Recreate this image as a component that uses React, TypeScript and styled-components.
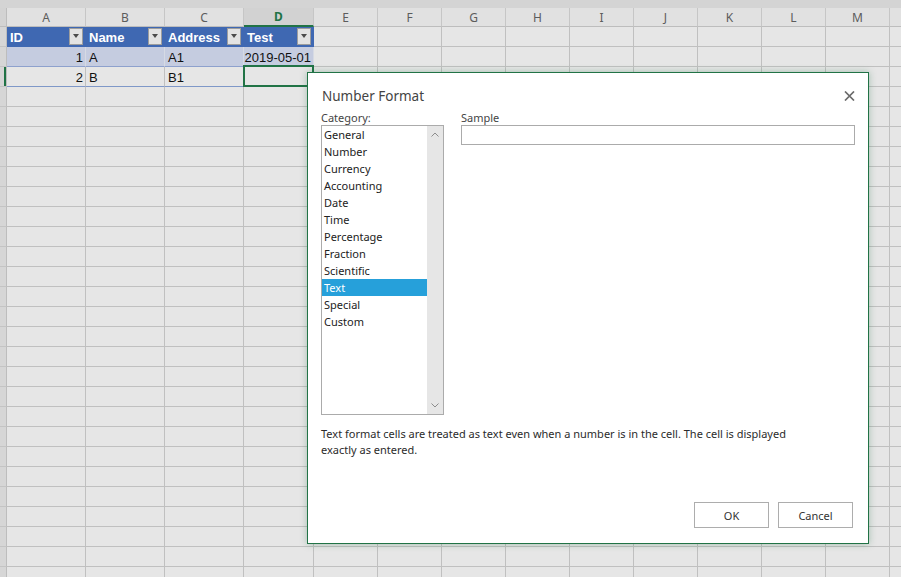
import styled, { createGlobalStyle, css } from "styled-components";

const GlobalStyle = createGlobalStyle`
  html, body {
    margin: 0;
    padding: 0;
    background: #e6e6e6;
  }
  body {
    overflow: hidden;
  }
`;

const Screen = styled.div`
  position: relative;
  width: 901px;
  height: 577px;
  overflow: hidden;
  background: #e6e6e6;
  font-family: "Liberation Sans", Arial, sans-serif;
`;

const TopBand = styled.div`
  height: 8px;
  background: #d4d4d4;
`;

// Sheet grid
const SheetGrid = styled.div`
  display: grid;
  grid-template-columns: 7px 79px 79px 79px 70px repeat(10, 64px);
  grid-template-rows: 19px;
  grid-auto-rows: 20px;
`;

const Corner = styled.div`
  box-sizing: border-box;
  background: #d3d3d3;
  border-right: 1px solid #bdbdbd;
  border-bottom: 1px solid #bdbdbd;
`;

const ColHeader = styled.div<{ $active?: boolean }>`
  box-sizing: border-box;
  display: flex;
  align-items: center;
  justify-content: center;
  background: #e1e1e1;
  border-right: 1px solid #c6c6c6;
  border-bottom: 1px solid #bdbdbd;
  color: #5c5c5c;
  font: 400 12px "Noto Sans", sans-serif;

  ${(p) =>
    p.$active &&
    css`
      background: #d2d2d2;
      color: #217346;
      font-weight: 700;
      border-bottom: 2px solid #217346;
    `}
`;

const RowHeader = styled.div<{ $active?: boolean }>`
  box-sizing: border-box;
  background: #d6d6d6;
  border-right: 1px solid #bdbdbd;
  border-bottom: 1px solid #c4c4c4;
  ${(p) => p.$active && css`box-shadow: inset -2px 0 0 #217346;`}
`;

type Tone = "head" | "band" | "row" | "plain";

const toneStyles: Record<Tone, ReturnType<typeof css>> = {
  head: css`
    background: #3f68b2;
    color: #fff;
    font-weight: 700;
    border-right-color: #3f68b2;
    border-bottom-color: #3f68b2;
  `,
  band: css`
    background: #c5cce0;
    border-right-color: #d6dae4;
    border-bottom-color: #8ea1cd;
  `,
  row: css`
    background: #e6e6e6;
    border-bottom-color: #7f98c8;
  `,
  plain: css``,
};

const Cell = styled.div<{ $tone?: Tone; $align?: "left" | "right"; $selected?: boolean }>`
  position: relative;
  box-sizing: border-box;
  display: flex;
  align-items: center;
  justify-content: ${(p) => (p.$align === "right" ? "flex-end" : "flex-start")};
  padding: 1px ${(p) => (p.$align === "right" ? "2px" : "0")} 0 3px;
  background: #e6e6e6;
  border-right: 1px solid #c0c0c0;
  border-bottom: 1px solid #c0c0c0;
  color: #111;
  font-size: 13px;
  white-space: nowrap;

  ${(p) => toneStyles[p.$tone ?? "plain"]}

  ${(p) =>
    p.$selected &&
    css`
      &::after {
        content: "";
        position: absolute;
        left: -1px;
        top: -2px;
        right: -1px;
        bottom: -1px;
        border: 2px solid #217346;
      }
    `}
`;

const HeadLabel = styled.span`
  flex: 1;
`;

const FilterButton = styled.span`
  box-sizing: border-box;
  display: flex;
  align-items: center;
  justify-content: center;
  width: 14px;
  height: 17px;
  margin: 0 2px 2px 0;
  background: #e3e3e3;
  border: 1px solid #9d9d9d;

  &::before {
    content: "";
    border-left: 3.5px solid transparent;
    border-right: 3.5px solid transparent;
    border-top: 4px solid #4b4b4b;
  }
`;

// Dialog
const Dialog = styled.div`
  position: absolute;
  left: 307px;
  top: 72px;
  width: 562px;
  height: 472px;
  box-sizing: border-box;
  display: flex;
  flex-direction: column;
  padding: 13px 13px 15px 13px;
  background: #fff;
  border: 1px solid #217346;
  box-shadow: 0 0 7px rgba(33, 115, 70, 0.35);
  font-family: "Noto Sans", sans-serif;
  font-size: 11px;
  color: #333;
`;

const TitleRow = styled.div`
  display: flex;
  align-items: center;
  justify-content: space-between;
  height: 20px;
`;

const Title = styled.span`
  padding-left: 1px;
  font-size: 13.5px;
  color: #444;
`;

const CloseButton = styled.span`
  display: flex;
  margin-right: 0;
`;

const Body = styled.div`
  display: flex;
  gap: 17px;
  margin-top: 4px;
`;

const LeftCol = styled.div`
  display: flex;
  flex-direction: column;
  width: 123px;
`;

const RightCol = styled.div`
  display: flex;
  flex: 1;
  flex-direction: column;
`;

const FieldLabel = styled.span`
  line-height: 15px;
  color: #444;
`;

const ListBox = styled.div`
  box-sizing: border-box;
  display: flex;
  height: 290px;
  border: 1px solid #ababab;
`;

const Items = styled.div`
  flex: 1;
`;

const Item = styled.div<{ $selected?: boolean }>`
  height: 17px;
  line-height: 17px;
  padding-left: 2px;
  color: #222;
  ${(p) =>
    p.$selected &&
    css`
      background: #26a0da;
      color: #fff;
    `}
`;

const ScrollBar = styled.div`
  display: flex;
  flex-direction: column;
  justify-content: space-between;
  width: 16px;
  background: #e6e6e6;
`;

const ScrollArrow = styled.span`
  display: flex;
  align-items: center;
  justify-content: center;
  height: 17px;
`;

const SampleBox = styled.div`
  box-sizing: border-box;
  height: 20px;
  border: 1px solid #ababab;
`;

const Description = styled.p`
  margin: 11px 0 0;
  line-height: 16px;
  color: #2b2b2b;
`;

const Spacer = styled.div`
  flex: 1;
`;

const ButtonRow = styled.div`
  display: flex;
  justify-content: flex-end;
  gap: 9px;
  margin-right: 2px;
`;

const Button = styled.button`
  box-sizing: border-box;
  width: 75px;
  height: 26px;
  padding: 0;
  background: #fff;
  border: 1px solid #adadad;
  color: #333;
  font: 11px "Noto Sans", sans-serif;
`;

// N is only partly on screen, so its letter is not shown
const columns = ["A", "B", "C", "D", "E", "F", "G", "H", "I", "J", "K", "L", "M", ""];
const headers = ["ID", "Name", "Address", "Test"];

type Row = { tone: Tone; active?: boolean; cells: { text: string; align?: "left" | "right"; selected?: boolean }[] };

const tableRows: Row[] = [
  {
    tone: "band",
    cells: [{ text: "1", align: "right" }, { text: "A" }, { text: "A1" }, { text: "2019-05-01", align: "right" }],
  },
  {
    tone: "row",
    active: true,
    cells: [{ text: "2", align: "right" }, { text: "B" }, { text: "B1" }, { text: "", selected: true }],
  },
];

const categories = [
  "General",
  "Number",
  "Currency",
  "Accounting",
  "Date",
  "Time",
  "Percentage",
  "Fraction",
  "Scientific",
  "Text",
  "Special",
  "Custom",
];

const emptyRows = 26;

const Chevron = ({ up }: { up?: boolean }) => (
  <svg width="8" height="5" viewBox="0 0 8 5">
    <path d={up ? "M0.5 4.5L4 1L7.5 4.5" : "M0.5 0.5L4 4L7.5 0.5"} stroke="#8c8c8c" strokeWidth="1" fill="none" />
  </svg>
);

export default function App() {
  const rest = columns.slice(4);

  return (
    <Screen>
      <GlobalStyle />
      <TopBand />
      <SheetGrid>
        <Corner />
        {columns.map((c, i) => (
          <ColHeader key={"c" + i} $active={c === "D"}>
            {c}
          </ColHeader>
        ))}

        <RowHeader />
        {headers.map((h) => (
          <Cell key={h} $tone="head">
            <HeadLabel>{h}</HeadLabel>
            <FilterButton />
          </Cell>
        ))}
        {rest.map((_, i) => (
          <Cell key={"h" + i} />
        ))}

        {tableRows.map((row, r) => (
          <>
            <RowHeader key={"rh" + r} $active={row.active} />
            {row.cells.map((cell, i) => (
              <Cell key={r + "-" + i} $tone={row.tone} $align={cell.align} $selected={cell.selected}>
                {cell.text}
              </Cell>
            ))}
            {rest.map((_, i) => (
              <Cell key={r + "r" + i} />
            ))}
          </>
        ))}

        {Array.from({ length: emptyRows }).map((_, r) => (
          <>
            <RowHeader key={"er" + r} />
            {columns.map((_, i) => (
              <Cell key={"e" + r + "-" + i} />
            ))}
          </>
        ))}
      </SheetGrid>

      <Dialog>
        <TitleRow>
          <Title>Number Format</Title>
          <CloseButton title="Close">
            <svg width="11" height="10" viewBox="0 0 11 10">
              <path d="M1 0.5L10 9.5M10 0.5L1 9.5" stroke="#6a6a6a" strokeWidth="1.7" />
            </svg>
          </CloseButton>
        </TitleRow>

        <Body>
          <LeftCol>
            <FieldLabel>Category:</FieldLabel>
            <ListBox>
              <Items>
                {categories.map((c) => (
                  <Item key={c} $selected={c === "Text"}>
                    {c}
                  </Item>
                ))}
              </Items>
              <ScrollBar>
                <ScrollArrow>
                  <Chevron up />
                </ScrollArrow>
                <ScrollArrow>
                  <Chevron />
                </ScrollArrow>
              </ScrollBar>
            </ListBox>
          </LeftCol>

          <RightCol>
            <FieldLabel>Sample</FieldLabel>
            <SampleBox />
          </RightCol>
        </Body>

        <Description>
          Text format cells are treated as text even when a number is in the cell. The cell is displayed
          <br />
          exactly as entered.
        </Description>

        <Spacer />

        <ButtonRow>
          <Button>OK</Button>
          <Button>Cancel</Button>
        </ButtonRow>
      </Dialog>
    </Screen>
  );
}
